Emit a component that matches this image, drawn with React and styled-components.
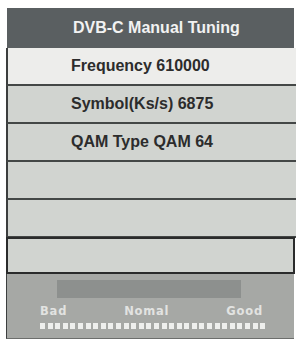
import React from "react";
import styled, { createGlobalStyle } from "styled-components";

const GlobalStyle = createGlobalStyle`
  body {
    margin: 0;
    background: #ffffff;
    font-family: "Liberation Sans", Arial, sans-serif;
  }
`;

const rows = [
  { label: "Frequency 610000", active: true },
  { label: "Symbol(Ks/s) 6875" },
  { label: "QAM Type QAM 64" },
  { label: "" },
  { label: "" },
  { label: "", boxed: true },
];

function App() {
  return (
    <>
      <GlobalStyle />
      <Screen>
        <Header>DVB-C Manual Tuning</Header>
        {rows.map((row, i) => (
          <Row key={i} $active={row.active} $boxed={row.boxed}>
            {row.label}
          </Row>
        ))}
        <SignalPanel>
          <SignalBar />
          <Labels>
            <span>Bad</span>
            <span>Nomal</span>
            <span>Good</span>
          </Labels>
          <Dots>
            {Array.from({ length: 30 }).map((_, i) => (
              <Dot key={i} />
            ))}
          </Dots>
        </SignalPanel>
      </Screen>
    </>
  );
}

const Screen = styled.div`
  display: flex;
  flex-direction: column;
  width: 290px;
  margin: 8px 0 0 6px;
`;

const Header = styled.div`
  height: 40px;
  margin-left: 1px;
  width: 287px;
  background: #5a5f61;
  color: #f2f2f2;
  font-size: 16px;
  font-weight: bold;
  display: flex;
  align-items: center;
  padding-left: 66px;
  box-sizing: border-box;
`;

const Row = styled.div`
  height: 38px;
  box-sizing: border-box;
  background: ${(p) => (p.$active ? "#ededeb" : "#d1d4d0")};
  border-left: 2px solid #3c3e3e;
  border-bottom: 2px solid #444746;
  color: #2c2c2c;
  font-size: 16px;
  font-weight: bold;
  display: flex;
  align-items: center;
  padding-left: 63px;
  ${(p) =>
    p.$boxed &&
    `
    height: 37px;
    width: 289px;
    border: 2px solid #2a2b2b;
    margin-top: -1px;
  `}
`;

const SignalPanel = styled.div`
  height: 65px;
  width: 288px;
  box-sizing: border-box;
  background: #a6a8a5;
  border-left: 1px solid #3c3e3e;
  border-bottom: 1px solid #6c6e6c;
  display: flex;
  flex-direction: column;
  padding-top: 6px;
`;

const SignalBar = styled.div`
  margin-left: 50px;
  width: 184px;
  height: 18px;
  background: #8d908e;
`;

const Labels = styled.div`
  display: flex;
  justify-content: space-between;
  margin: 6px 31px 0 33px;
  font-family: "DejaVu Sans", sans-serif;
  font-size: 11.5px;
  font-weight: bold;
  letter-spacing: 0.8px;
  color: #e2e3e1;
  line-height: 14px;
`;

const Dots = styled.div`
  display: flex;
  gap: 2.6px;
  margin: 5px 0 0 33px;
`;

const Dot = styled.div`
  width: 5px;
  height: 6px;
  background: #eeefed;
`;

export default App;
